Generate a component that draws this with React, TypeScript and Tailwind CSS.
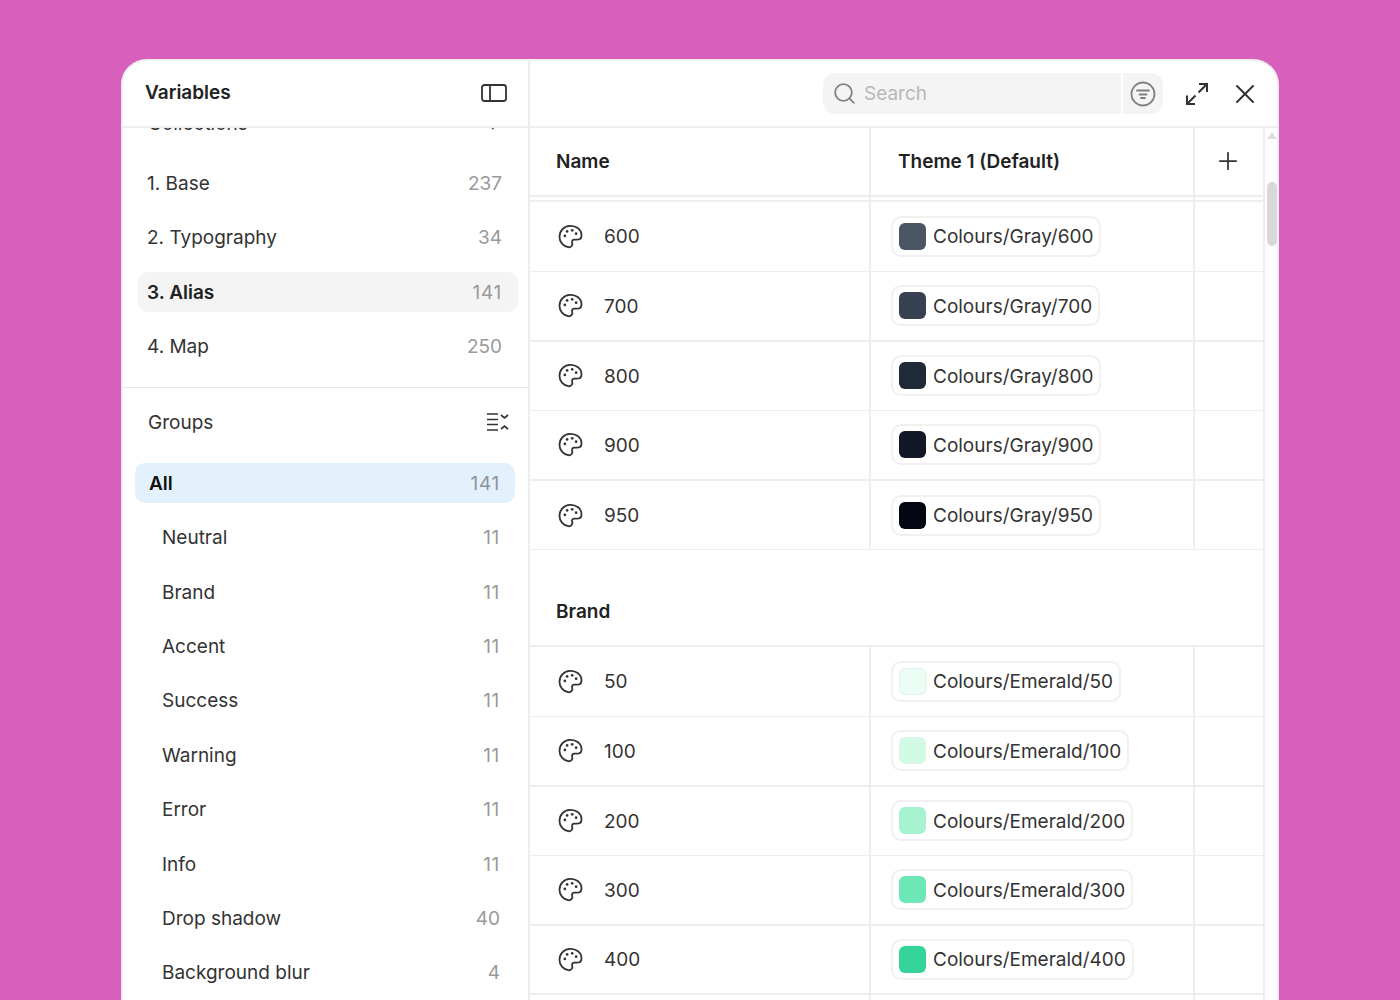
import React from 'react';
import { Plus, Search, X } from 'lucide-react';

const collections = [
  { name: '1. Base', count: '237' },
  { name: '2. Typography', count: '34' },
  { name: '3. Alias', count: '141', active: true },
  { name: '4. Map', count: '250' },
];

const groups = [
  { name: 'Neutral', count: '11' },
  { name: 'Brand', count: '11' },
  { name: 'Accent', count: '11' },
  { name: 'Success', count: '11' },
  { name: 'Warning', count: '11' },
  { name: 'Error', count: '11' },
  { name: 'Info', count: '11' },
  { name: 'Drop shadow', count: '40' },
  { name: 'Background blur', count: '4' },
];

const grayRows = [
  { name: '600', ref: 'Colours/Gray/600', color: '#4b5563' },
  { name: '700', ref: 'Colours/Gray/700', color: '#374151', thick: true },
  { name: '800', ref: 'Colours/Gray/800', color: '#1f2937' },
  { name: '900', ref: 'Colours/Gray/900', color: '#111827', thick: true },
  { name: '950', ref: 'Colours/Gray/950', color: '#030712' },
];

const brandRows = [
  { name: '50', ref: 'Colours/Emerald/50', color: '#ecfdf5', pale: true },
  { name: '100', ref: 'Colours/Emerald/100', color: '#d1fae5', thick: true, pale: true },
  { name: '200', ref: 'Colours/Emerald/200', color: '#a7f3d0' },
  { name: '300', ref: 'Colours/Emerald/300', color: '#6ee7b7', thick: true },
  { name: '400', ref: 'Colours/Emerald/400', color: '#34d399', thick: true },
  { name: '500', ref: 'Colours/Emerald/500', color: '#10b981' },
];

type Row = { name: string; ref: string; color: string; thick?: boolean; pale?: boolean };

const countClass = (count: string) => (count.includes('1') ? 'tracking-[0.7px]' : '');

const PaletteIcon = () => (
  <svg width="27" height="27" viewBox="0 0 24 24" fill="none" stroke="#333333" strokeWidth="1.6" strokeLinejoin="round">
    <path d="M11.500 2.500C17 2.200 21.800 5.800 21.800 11C21.800 13.500 20 14.800 17.500 14.800H15.500C13.800 14.800 13 16 13.500 17.500C14.200 19.500 12.500 22 10 21.500C5.500 20.800 2.200 17 2.200 12.300C2.200 6.800 6.400 2.700 11.500 2.500Z" />
    <g fill="#333333" stroke="none">
      <circle cx="7" cy="11.500" r="1.200" />
      <circle cx="9" cy="7.500" r="1.200" />
      <circle cx="13.500" cy="6.500" r="1.200" />
      <circle cx="17" cy="9.500" r="1.200" />
    </g>
  </svg>
);

const VariableRow = ({ row }: { row: Row }) => (
  <div
    className={`grid grid-cols-[341px_324px_1fr] h-[69.6px] shrink-0 border-[#eeeeee] ${
      row.thick ? 'border-b-2' : 'border-b'
    }`}
  >
    <div className="flex items-center pl-[27px] gap-[20px] border-r-2 border-[#eeeeee]">
      <PaletteIcon />
      <span className="pt-[2px] text-[19px] text-[#333333]">{row.name}</span>
    </div>
    <div className="flex items-center pl-[20px] border-r-2 border-[#eeeeee]">
      <div className="flex items-center h-[41px] pl-[6px] pr-[6px] gap-[7px] border-2 border-[#f0f0f0] rounded-[10px]">
        <span
          className={`w-[27px] h-[27px] rounded-[6px] ${row.pale ? 'border border-[#dff2e8]' : ''}`}
          style={{ backgroundColor: row.color }}
        />
        <span className="pt-[2px] text-[19px] text-[#333333] whitespace-nowrap">{row.ref}</span>
      </div>
    </div>
    <div />
  </div>
);

export default function App() {
  return (
    <div className="h-screen overflow-hidden bg-[#d660bc] pt-[59px] px-[121px] font-['Inter',sans-serif]">
      <div className="h-[1000px] bg-white rounded-t-[26px] border-2 border-[#f0f0f0] flex flex-col">
        {/* Top bar */}
        <div className="flex h-[67px] shrink-0 border-b-2 border-[#eeeeee]">
          <div className="w-[407px] shrink-0 flex items-center justify-between pl-[22px] pr-[21px] border-r-2 border-[#eeeeee]">
            <span className="text-[19px] font-semibold text-[#222222]">Variables</span>
            <svg className="-mt-[2px]" width="26" height="18" viewBox="0 0 26 18" fill="none" stroke="#333333" strokeWidth="1.800">
              <rect x="1" y="1" width="24" height="16" rx="2.500" />
              <path d="M9 1v16" />
            </svg>
          </div>
          <div className="flex-1 flex items-center justify-end pr-[16px]">
            <div className="flex w-[340px] h-[41px] rounded-[12px] overflow-hidden">
              <div className="flex-1 flex items-center gap-[7px] pl-[9px] bg-[#f4f4f4]">
                <Search size={25} strokeWidth={1.700} className="text-[#808080]" />
                <span className="pt-[2px] text-[19px] text-[#b8b8b8]">Search</span>
              </div>
              <div className="w-[40px] ml-[2px] flex items-center justify-center bg-[#f4f4f4]">
                <svg width="26" height="26" viewBox="0 0 26 26" fill="none" stroke="#808080" strokeWidth="1.800" strokeLinecap="round">
                  <circle cx="13" cy="13" r="11.500" />
                  <path d="M7 9.500h12M9.500 13.500h7M11 17h4" />
                </svg>
              </div>
            </div>
            <svg className="ml-[23px]" width="22" height="22" viewBox="0 0 22 22" fill="none" stroke="#333333" strokeWidth="2">
              <path d="M13 1h8v8M21 1l-8.500 8.500M1 12.500V21h8M1 21l8.500-8.500" />
            </svg>
            <X size={32} strokeWidth={1.500} className="ml-[21px] text-[#333333]" />
          </div>
        </div>

        <div className="flex flex-1 min-h-0">
          {/* Sidebar */}
          <div className="w-[407px] shrink-0 border-r-2 border-[#eeeeee] overflow-hidden">
            <div className="-mt-[16px] flex items-center justify-between pl-[25px] pr-[29px] h-[24px] text-[19px] text-[#333333]">
              <span>Collections</span>
              <span>+</span>
            </div>
            <div className="pt-[27px] pl-[15px] pr-[10px] flex flex-col gap-[14.4px]">
              {collections.map((c) => (
                <div
                  key={c.name}
                  className={`flex items-center justify-between h-[40px] pl-[9px] pr-[16px] rounded-[10px] text-[19px] ${
                    c.active ? 'bg-[#f4f4f4] font-semibold text-[#222222]' : 'text-[#333333]'
                  }`}
                >
                  <span className="pt-[2px]">{c.name}</span>
                  <span className={`pt-[2px] font-normal text-[#999999] ${countClass(c.count)}`}>{c.count}</span>
                </div>
              ))}
            </div>
            <div className="mt-[21px] border-t border-[#e8e8e8] flex items-center justify-between h-[69px] pl-[25px] pr-[19px]">
              <span className="pt-[2px] text-[19px] text-[#333333]">Groups</span>
              <svg width="22" height="20" viewBox="0 0 22 20" fill="none" stroke="#333333" strokeWidth="1.700">
                <path d="M0 2h11M0 7.500h11M0 12.500h11M0 18h11" />
                <path d="M14 3l3.500 3 3.500-3M14 17l3.500-3 3.500 3" />
              </svg>
            </div>
            <div className="pl-[12px] pr-[13px] flex flex-col gap-[14.4px] pt-[7px]">
              <div className="flex items-center justify-between h-[40px] pl-[14px] pr-[15px] rounded-[10px] bg-[#e3f1fd] text-[19px]">
                <span className="pt-[2px] font-semibold text-[#111111]">All</span>
                <span className={`pt-[2px] text-[#8f949a] ${countClass('141')}`}>141</span>
              </div>
              {groups.map((g) => (
                <div key={g.name} className="flex items-center justify-between h-[40px] pl-[27px] pr-[15px] text-[19px] text-[#333333]">
                  <span className="pt-[2px]">{g.name}</span>
                  <span className={`pt-[2px] text-[#999999] ${countClass(g.count)}`}>{g.count}</span>
                </div>
              ))}
            </div>
          </div>

          {/* Table */}
          <div className="flex-1 min-w-0 flex overflow-hidden">
            <div className="w-[735px] shrink-0 border-r-2 border-[#eeeeee] flex flex-col">
              <div className="grid grid-cols-[341px_324px_1fr] h-[69px] shrink-0 border-b-2 border-[#eeeeee]">
                <div className="flex items-center pl-[26px] pt-[2px] border-r-2 border-[#eeeeee] text-[19px] font-semibold text-[#222222]">Name</div>
                <div className="flex items-center pl-[27px] pt-[2px] border-r-2 border-[#eeeeee] text-[19px] font-semibold text-[#222222]">Theme 1 (Default)</div>
                <div className="flex items-center justify-center">
                  <Plus size={28} strokeWidth={1.500} className="text-[#333333] -ml-[2px] -mt-[2px]" />
                </div>
              </div>
              <div className="grid grid-cols-[341px_324px_1fr] h-[5.4px] shrink-0 border-b-2 border-[#eeeeee]">
                <div className="border-r-2 border-[#eeeeee]" />
                <div className="border-r-2 border-[#eeeeee]" />
              </div>
              {grayRows.map((r) => (
                <VariableRow key={r.name} row={r} />
              ))}
              <div className="h-[97px] shrink-0 flex items-end pb-[19px] pl-[26px] border-b-2 border-[#eeeeee] text-[19px] font-semibold text-[#222222]">
                Brand
              </div>
              {brandRows.map((r) => (
                <VariableRow key={r.name} row={r} />
              ))}
            </div>
            <div className="flex-1 flex flex-col items-center pt-[4px] pl-[1px]">
              <div className="w-0 h-0 border-l-[5px] border-r-[5px] border-b-[7px] border-l-transparent border-r-transparent border-b-[#dddddd]" />
              <div className="mt-[43px] w-[10px] h-[64px] rounded-full bg-[#d8d8d8]" />
            </div>
          </div>
        </div>
      </div>
    </div>
  );
}
